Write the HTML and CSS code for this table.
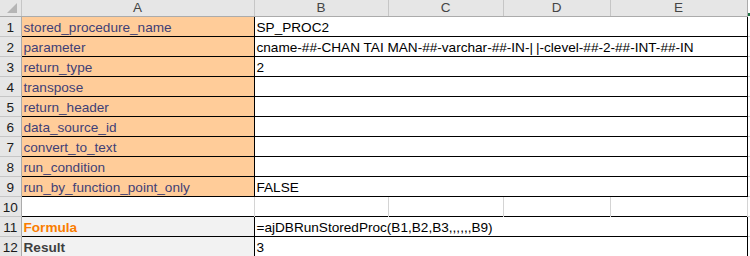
FILE: index.html
```html
<!DOCTYPE html>
<html>
<head>
<meta charset="utf-8">
<link rel="stylesheet" href="styles.css">
</head>
<body>
<table class="sheet">
  <colgroup>
    <col class="c-rh"><col class="c-a"><col class="c-b"><col class="c-c"><col class="c-d"><col class="c-e"><col class="c-x">
  </colgroup>
  <tr class="hdr">
    <th class="corner"><svg width="20" height="15" viewBox="0 0 20 15"><polygon points="17,3 17,13 7,13" fill="#b5b5b5"/></svg></th>
    <th>A</th><th>B</th><th>C</th><th>D</th><th class="last">E</th><th class="pad"><span class="sel"></span></th>
  </tr>
  <tr><th class="rh">1</th><td class="inp">stored_procedure_name</td><td class="val" colspan="4">SP_PROC2</td><td class="pad"></td></tr>
  <tr><th class="rh">2</th><td class="inp">parameter</td><td class="val" colspan="4">cname-##-CHAN TAI MAN-##-varchar-##-IN-<span class="pipe">|</span>|-clevel-##-2-##-INT-##-IN</td><td class="pad"></td></tr>
  <tr><th class="rh">3</th><td class="inp">return_type</td><td class="val" colspan="4">2</td><td class="pad"></td></tr>
  <tr><th class="rh">4</th><td class="inp">transpose</td><td class="val" colspan="4"></td><td class="pad"></td></tr>
  <tr><th class="rh">5</th><td class="inp">return_header</td><td class="val" colspan="4"></td><td class="pad"></td></tr>
  <tr><th class="rh">6</th><td class="inp">data_source_id</td><td class="val" colspan="4"></td><td class="pad"></td></tr>
  <tr><th class="rh">7</th><td class="inp">convert_to_text</td><td class="val" colspan="4"></td><td class="pad"></td></tr>
  <tr><th class="rh">8</th><td class="inp">run_condition</td><td class="val" colspan="4"></td><td class="pad"></td></tr>
  <tr><th class="rh">9</th><td class="inp">run_by_function_point_only</td><td class="val" colspan="4">FALSE</td><td class="pad"></td></tr>
  <tr class="blank"><th class="rh">10</th><td class="g"></td><td class="g"></td><td class="g"></td><td class="g"></td><td class="g"></td><td class="pad"></td></tr>
  <tr><th class="rh">11</th><td class="calc">Formula</td><td class="val" colspan="4">=ajDBRunStoredProc(B1,B2,B3,,,,,,B9)</td><td class="pad"></td></tr>
  <tr><th class="rh">12</th><td class="out">Result</td><td class="val" colspan="4">3</td><td class="pad"></td></tr>
</table>
</body>
</html>
```

FILE: styles.css
```css
html, body {
  margin: 0;
  padding: 0;
  background: #ffffff;
}
.sheet {
  border-collapse: collapse;
  table-layout: fixed;
  width: 750px;
  font-family: "Liberation Sans", Arial, sans-serif;
  font-size: 13.6px;
}
.c-rh { width: 21px; }
.c-a { width: 233px; }
.c-b { width: 134px; }
.c-c { width: 115px; }
.c-d { width: 107px; }
.c-e { width: 137px; }
.c-x { width: 3px; }

.hdr { height: 16px; }
.hdr th {
  padding: 0;
  background: #e6e6e6;
  color: #444444;
  font-weight: normal;
  font-size: 13.5px;
  line-height: 14px;
  text-align: center;
  border-right: 1px solid #c6c6c6;
  border-bottom: 1px solid #ababab;
}
.hdr th.corner {
  line-height: 0;
}
.hdr th.corner svg { display: block; }
.hdr th.last { border-right: 1px solid #ababab; }
.hdr th.pad {
  border-right: none;
  background: #ffffff;
  border-bottom: none;
  position: relative;
}
.sel {
  position: absolute;
  left: 0;
  bottom: 0;
  width: 2px;
  height: 3px;
  background: #217346;
}

tr { height: 20px; }
td, th.rh {
  padding: 0 2px;
  white-space: nowrap;
  overflow: visible;
  line-height: 16px;
  vertical-align: bottom;
}
th.rh {
  background: #e6e6e6;
  color: #1a1a1a;
  font-weight: normal;
  text-align: center;
  padding: 0;
  border-right: 1px solid #ababab;
  border-bottom: 1px solid #c6c6c6;
}
td.inp {
  background: #ffcc99;
  color: #3f3f76;
  border: 1px solid #000000;
}
td.val {
  color: #000000;
  border: 1px solid #000000;
}
.pipe { letter-spacing: 3px; }
td.calc {
  background: #f2f2f2;
  color: #fa7d00;
  font-weight: bold;
  border: 1px solid #000000;
}
td.out {
  background: #f2f2f2;
  color: #3f3f3f;
  font-weight: bold;
  border: 1px solid #000000;
}
td.g {
  border-right: 1px solid #d4d4d4;
}
td.pad {
  padding: 0;
  border-bottom: 1px solid #d4d4d4;
}
```
